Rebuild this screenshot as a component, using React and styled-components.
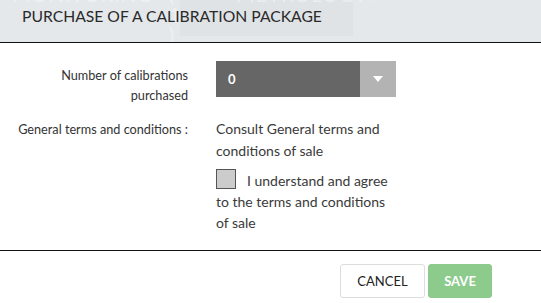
import React from "react";
import styled, { createGlobalStyle } from "styled-components";

const GlobalStyle = createGlobalStyle`
  html, body {
    margin: 0;
    padding: 0;
    background: #ffffff;
    font-family: Lato, "Open Sans", "Liberation Sans", sans-serif;
  }
`;

const Dialog = styled.div`
  width: 541px;
  height: 303px;
  background: #ffffff;
  overflow: hidden;
  display: flex;
  flex-direction: column;
`;

const Header = styled.div`
  position: relative;
  height: 42px;
  background: #e5e8ea;
  border-bottom: 1px solid #111111;
  overflow: hidden;
`;

const GhostNav = styled.div`
  display: flex;
  height: 36px;
  margin-top: -16px;
`;

const GhostTab = styled.div`
  display: flex;
  align-items: flex-start;
  gap: ${(p) => p.$gap || 16}px;
  width: ${(p) => p.$width}px;
  padding-left: ${(p) => p.$pad}px;
  box-sizing: border-box;
  background: ${(p) => (p.$active ? "#e0e3e5" : "transparent")};
  height: 52px;
  color: rgba(255, 255, 255, 0.4);
  font-size: 20px;
  letter-spacing: 1px;
  line-height: 20px;
`;

const Title = styled.h1`
  position: absolute;
  left: 22px;
  top: 7px;
  margin: 0;
  font-size: 15.7px;
  font-weight: 400;
  color: #2a2a2a;
`;

const Body = styled.div`
  flex: 0 0 auto;
  box-sizing: border-box;
  padding-top: 18px;
  border-bottom: 1px solid #111111;
  display: grid;
  grid-template-columns: 188px 180px;
  column-gap: 28px;
  row-gap: 13px;
  align-content: start;
  height: 208px;
`;

const Label = styled.div`
  text-align: right;
  font-size: 12.7px;
  line-height: ${(p) => p.$lh || 20}px;
  color: #333333;
  padding-top: ${(p) => p.$top || 0}px;
`;

const Select = styled.div`
  display: flex;
  height: 36px;
  width: 180px;
`;

const SelectValue = styled.div`
  flex: 1;
  background: #666666;
  color: #ffffff;
  font-weight: 700;
  font-size: 13px;
  display: flex;
  align-items: center;
  padding-left: 12px;
`;

const SelectArrow = styled.div`
  width: 36px;
  background: #b3b3b3;
  display: flex;
  align-items: center;
  justify-content: center;
`;

const Value = styled.div`
  font-size: 14px;
  line-height: 22px;
  color: #3a3a3a;
`;

const Agree = styled.div`
  margin-top: 7px;
  font-size: 14px;
  line-height: 21px;
  color: #3a3a3a;
`;

const Check = styled.span`
  display: inline-block;
  width: 20px;
  height: 20px;
  background: #cccccc;
  border: 1px solid #555555;
  vertical-align: -3px;
  margin-right: 11px;
  box-sizing: border-box;
`;

const Footer = styled.div`
  display: flex;
  justify-content: flex-end;
  gap: 3px;
  padding: 13px 49px 0 0;
`;

const Button = styled.button`
  height: 34px;
  width: ${(p) => p.$width}px;
  border-radius: 3px;
  font-family: inherit;
  font-size: 13px;
  font-weight: ${(p) => (p.$primary ? 700 : 400)};
  color: ${(p) => (p.$primary ? "#ffffff" : "#222222")};
  background: ${(p) => (p.$primary ? "#8ccb8c" : "#ffffff")};
  border: 1px solid ${(p) => (p.$primary ? "#8ccb8c" : "#dddddd")};
  padding: 0;
  cursor: pointer;
`;

export default function App() {
  return (
    <>
      <GlobalStyle />
      <Dialog>
        <Header>
          <GhostNav aria-hidden="true">
            <GhostTab $width={180} $pad={12}>
              <span>MONITORING</span>
              <span>( 1 )</span>
            </GhostTab>
            <GhostTab $width={173} $pad={56} $active>
              <span>METROLOGY</span>
            </GhostTab>
            <GhostTab $width={60} $pad={14}>
              <span>»</span>
            </GhostTab>
          </GhostNav>
          <Title>PURCHASE OF A CALIBRATION PACKAGE</Title>
        </Header>
        <Body>
          <Label $top={4}>
            Number of calibrations
            <br />
            purchased
          </Label>
          <Select>
            <SelectValue>0</SelectValue>
            <SelectArrow>
              <svg width="10" height="6" viewBox="0 0 10 6">
                <path d="M0 0 L10 0 L5 6 Z" fill="#ffffff" />
              </svg>
            </SelectArrow>
          </Select>
          <Label $lh={22}>General terms and conditions :</Label>
          <div>
            <Value>Consult General terms and conditions of sale</Value>
            <Agree>
              <Check />I understand and agree to the terms and conditions of sale
            </Agree>
          </div>
        </Body>
        <Footer>
          <Button $width={85}>CANCEL</Button>
          <Button $width={64} $primary>
            SAVE
          </Button>
        </Footer>
      </Dialog>
    </>
  );
}
